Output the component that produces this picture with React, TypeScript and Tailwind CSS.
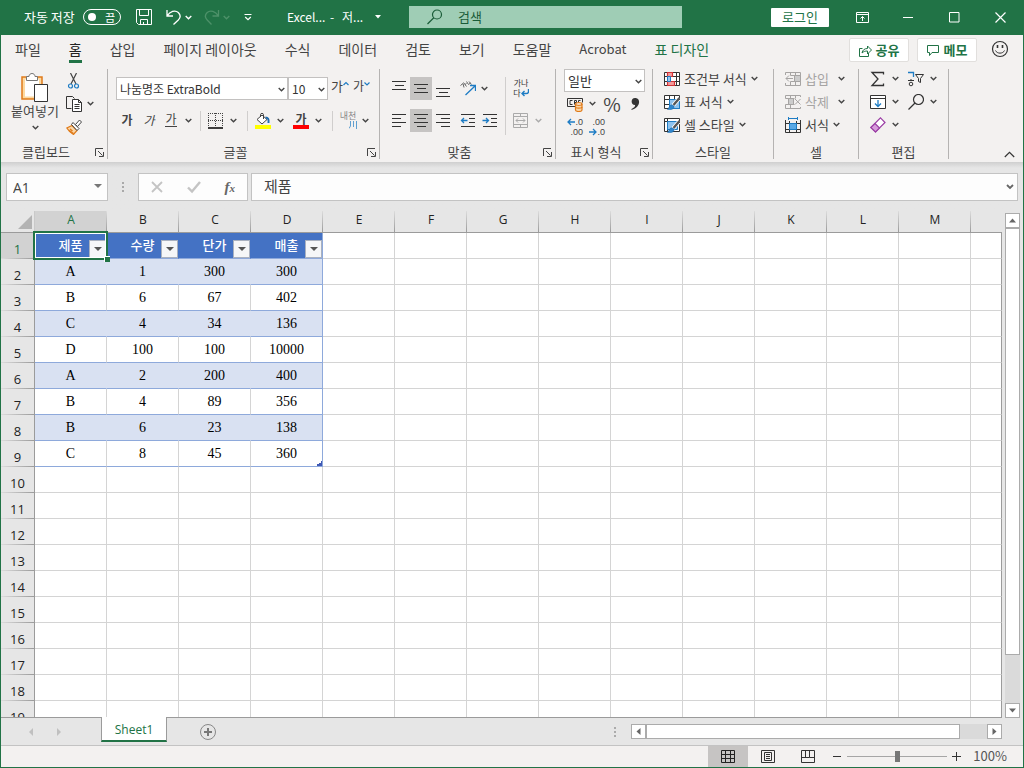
import { useState } from 'react';
import type { ReactNode } from 'react';

const menuTabs = ['파일', '홈', '삽입', '페이지 레이아웃', '수식', '데이터', '검토', '보기', '도움말', 'Acrobat', '표 디자인'];
const columns = ['A', 'B', 'C', 'D', 'E', 'F', 'G', 'H', 'I', 'J', 'K', 'L', 'M'];
const tableHeaders = ['제품', '수량', '단가', '매출'];
const tableRows = [
  ['A', '1', '300', '300'],
  ['B', '6', '67', '402'],
  ['C', '4', '34', '136'],
  ['D', '100', '100', '10000'],
  ['A', '2', '200', '400'],
  ['B', '4', '89', '356'],
  ['B', '6', '23', '138'],
  ['C', '8', '45', '360'],
];
const ROW_COUNT = 19;

function Chevron({ className = 'text-[#444]' }: { className?: string }) {
  return (
    <svg width="7" height="5" viewBox="0 0 7 5" className={`shrink-0 ${className}`} fill="none" stroke="currentColor" strokeWidth="1.4">
      <path d="M0.7 1 3.5 3.7 6.3 1" />
    </svg>
  );
}

function Icon({ children, size = 16, className = '' }: { children: ReactNode; size?: number; className?: string }) {
  return (
    <svg width={size} height={size} viewBox={`0 0 ${size} ${size}`} fill="none" stroke="currentColor" className={`shrink-0 ${className}`}>
      {children}
    </svg>
  );
}

function Tool({ label, className = 'w-[22px]', children }: { label: string; className?: string; children: ReactNode }) {
  return (
    <button type="button" aria-label={label} className={`flex h-[23px] items-center justify-center ${className}`}>
      {children}
    </button>
  );
}

function Divider() {
  return <div className="mx-1.5 h-5 w-px bg-[#d0cecd]" />;
}

function Launcher({ label }: { label: string }) {
  return (
    <button type="button" aria-label={label} className="flex w-4 items-center justify-center">
      <Icon size={9} className="text-[#444]">
        <path d="M0.5 8V0.5H8M3 3l4.5 4.5M8.5 4v4.5H4" />
      </Icon>
    </button>
  );
}

function Group({ title, launcher, className, children }: { title: string; launcher?: boolean; className: string; children: ReactNode }) {
  return (
    <section className={`flex h-[90px] shrink-0 flex-col border-r border-[#b5b3b2] ${className}`}>
      <div className="flex-1">{children}</div>
      <div className="flex h-3.5 items-center">
        <span className="flex-1 text-center leading-3.5">{title}</span>
        {launcher && <Launcher label={`${title} 설정`} />}
      </div>
    </section>
  );
}

function Dropdown({ label, value, className }: { label: string; value: string; className: string }) {
  return (
    <div className={`relative ${className}`}>
      <select aria-label={label} className="h-[23px] w-full appearance-none border border-[#c3c1c0] bg-white pl-[3px] leading-5 text-[#333]">
        <option>{value}</option>
      </select>
      <Chevron className="pointer-events-none absolute top-[10px] right-[3px] text-[#444]" />
    </div>
  );
}

function TitleBar() {
  const [autoSave, setAutoSave] = useState(false);

  return (
    <header className="flex h-[35px] shrink-0 items-center bg-[#217346] pb-px pl-[23px] text-white">
      <span className="w-[59px]">자동 저장</span>
      <button
        type="button"
        role="switch"
        aria-checked={autoSave}
        aria-label="자동 저장"
        onClick={() => setAutoSave(!autoSave)}
        className="flex h-4 w-[38px] items-center justify-between rounded-full border border-white px-1 text-[11px] leading-3"
      >
        <span className="size-2 rounded-full bg-white" />
        <span className="pr-px">끔</span>
      </button>
      <button type="button" aria-label="저장" className="ml-[15px]">
        <Icon>
          <path d="M0.5 0.5h15v15h-13l-2-2zM3.5 0.5v6h9v-6M4.5 15.5v-5h7v5M7.500 13v2.5" />
        </Icon>
      </button>
      <button type="button" aria-label="실행 취소" className="ml-3.5">
        <Icon>
          <path strokeWidth="1.3" d="M1 1v6h6M1.3 6.7C4 2.5 9 .5 12.3 3.5c2.7 2.7 2 5.5 0 7.5L7.5 15.5" />
        </Icon>
      </button>
      <button type="button" aria-label="실행 취소 목록" className="ml-[3px]"><Chevron className="text-white" /></button>
      <button type="button" aria-label="다시 실행" className="ml-3 text-[#4d9169]">
        <Icon>
          <path strokeWidth="1.3" d="M14.5 1v6h-6M14.200 6.7C11.5 2.5 6.5 .5 3.2 3.5c-2.7 2.7-2 5.5 0 7.5L7.5 15.5" />
        </Icon>
      </button>
      <button type="button" aria-label="다시 실행 목록" className="ml-[3px]"><Chevron className="text-[#4d9169]" /></button>
      <button type="button" aria-label="빠른 실행 도구 모음" className="ml-3.5">
        <Icon size={8}>
          <path d="M0.5 1.5h7" />
          <path strokeWidth="1.2" d="M1.2 4 4 6.7 6.8 4" />
        </Icon>
      </button>
      <div className="ml-[35px] flex text-[12px]">
        <span className="w-[43px]">Excel...</span>
        <span className="w-3">-</span>
        <span className="w-[33px]">저...</span>
      </div>
      <button type="button" aria-label="파일 정보">
        <Icon size={6}><path d="M0 1h6L3 4.5z" fill="currentColor" stroke="none" /></Icon>
      </button>
      <label className="ml-7 flex h-[22px] w-[273px] items-center bg-[#9fcdb5] pl-[18px] text-[#1a5c38]">
        <Icon>
          <circle cx="10" cy="5.5" r="4.5" strokeWidth="1.2" />
          <path strokeWidth="1.2" d="M6.8 8.8.5 15" />
        </Icon>
        <input aria-label="검색" placeholder="검색" className="ml-[15px] w-40 bg-transparent outline-none placeholder:text-[#1a5c38]" />
      </label>
      <div className="flex-1" />
      <button type="button" className="mr-2.5 h-[19px] w-[58px] rounded-[1px] bg-white leading-4 text-[#217346]">로그인</button>
      <Tool label="리본 메뉴 표시 옵션" className="w-[46px]">
        <Icon size={13}>
          <path d="M0.5 1.5h12v10H.5zM.5 3.5h12M6.5 10V5.5M4.5 7.500l2-2 2 2" />
        </Icon>
      </Tool>
      <Tool label="최소화" className="w-[46px]"><Icon size={11}><path d="M0 5.5h10" /></Icon></Tool>
      <Tool label="최대화" className="w-[46px]"><Icon size={11}><path d="M.5.5h9.5v9.5H.5z" /></Icon></Tool>
      <Tool label="닫기" className="w-[46px]"><Icon size={11}><path strokeWidth="1.2" d="M.5.5l10 10M10.5.5l-10 10" /></Icon></Tool>
    </header>
  );
}

function MenuTabs() {
  return (
    <nav className="flex h-8 items-start text-[14px] text-[#444]">
      {menuTabs.map((tab) => (
        <button key={tab} type="button" className={`shrink-0 px-3.5 pt-1 ${tab === '표 디자인' ? 'text-[#217346]' : ''} ${tab === 'Acrobat' ? 'text-[13px]' : ''}`}>
          <span className={`block h-6 leading-5 ${tab === '홈' ? 'border-b-3 border-[#217346] text-[#222]' : ''}`}>{tab}</span>
        </button>
      ))}
      <div className="flex-1" />
      <button type="button" className="mt-[3px] mr-2 flex h-6 w-[60px] items-center justify-center gap-1 rounded-xs border border-[#e1dfdd] bg-white text-[13px] font-bold text-[#217346]">
        <Icon size={13}>
          <path d="M3.5 4.5h-3v8h9V9M3 9c.5-3 2.5-4.5 5.5-4.5V2l4 4-4 4V7C6 7 4.5 7.5 3 9z" />
        </Icon>
        공유
      </button>
      <button type="button" className="mt-[3px] mr-3.5 flex h-6 w-[60px] items-center justify-center gap-1 rounded-xs border border-[#e1dfdd] bg-white text-[13px] font-bold text-[#217346]">
        <Icon size={13}>
          <path d="M.5 1.5h11v7H5l-2.5 3v-3h-2z" />
        </Icon>
        메모
      </button>
      <button type="button" aria-label="의견 보내기" className="mt-[5px] mr-3.5">
        <Icon size={18} className="text-[#333]">
          <circle cx="9" cy="9" r="7.5" strokeWidth="1.2" />
          <path strokeWidth="1.6" d="M6.5 5v3M11.5 5v3" />
          <path d="M4.5 10.5c1.500 3.5 7.500 3.5 9 0" />
        </Icon>
      </button>
    </nav>
  );
}

function ClipboardGroup() {
  return (
    <Group title="클립보드" launcher className="w-[107px]">
      <div className="flex pl-1.5">
        <button type="button" className="flex w-[56px] flex-col items-center pt-[3px]">
          <svg width="28" height="31" viewBox="0 0 28 31" fill="none" aria-hidden="true">
            <path d="M1 5h20v22H1z" fill="#fdd9a0" stroke="#e07b1a" strokeWidth="1.5" />
            <path d="M4 7.5h14v17H4z" fill="#fff" />
            <path d="M5.5 8.5v-4H8c0-4 6-4 6 0h2.5v4z" fill="#fff" stroke="#777" />
            <path d="M13.5 12.5h13v17h-13z" fill="#fff" stroke="#333" />
          </svg>
          <span className="leading-4">붙여넣기</span>
          <span className="pt-1.5"><Chevron /></span>
        </button>
        <div>
          <Tool label="잘라내기">
            <Icon>
              <path d="M4.500 0 10 11M10.500 0 5 11" stroke="#444" strokeWidth="1.200" />
              <circle cx="4.5" cy="13" r="2" stroke="#1e7cc4" strokeWidth="1.2" />
              <circle cx="10.5" cy="13" r="2" stroke="#1e7cc4" strokeWidth="1.2" />
            </Icon>
          </Tool>
          <div className="flex items-center">
            <Tool label="복사">
              <Icon className="text-[#333]">
                <path d="M5.5 12.5h-5V.5h6l2 2" />
                <path d="M6.5 3.5h6l3 3v9h-9zM12.5 3.5v3h3M8.5 8.5h5M8.5 10.5h5M8.5 12.5h5" fill="#fff" />
              </Icon>
            </Tool>
            <button type="button" aria-label="복사 옵션" className="pl-0.5"><Chevron /></button>
          </div>
          <Tool label="서식 복사">
            <Icon>
              <path d="M.8 9 6 6.5l5 5L7.500 15.500C5 14 2.500 11.800.8 9z" fill="#fbd7a8" stroke="#e07b1a" strokeWidth="1.2" />
              <path d="M4 10l2.500 2M3 11.500l4.500 3" stroke="#e07b1a" strokeWidth="1.4" />
              <path d="M9.5 5.5 13.500 1l2 2-4 4.5z" fill="#fff" stroke="#444" />
              <path d="M7 3.5 13 9.500l-2 2-5.500-6z" fill="#fff" stroke="#444" />
            </Icon>
          </Tool>
        </div>
      </div>
    </Group>
  );
}

function FontGroup() {
  return (
    <Group title="글꼴" launcher className="w-[272px]">
      <div className="flex flex-col gap-[9px] pt-2 pl-2 text-[12px]">
        <div className="flex">
          <Dropdown label="글꼴" value="나눔명조 ExtraBold" className="w-[172px]" />
          <Dropdown label="글꼴 크기" value="10" className="w-10" />
          <button type="button" aria-label="글꼴 크기 크게" className="ml-[3px] flex w-[22px] text-[13px] leading-[18px]">
            가<Icon size={6} className="mt-1"><path d="M.5 4 3 1.5 5.5 4" stroke="#1e7cc4" strokeWidth="1.2" /></Icon>
          </button>
          <button type="button" aria-label="글꼴 크기 작게" className="flex w-[22px] leading-[18px]">
            가<Icon size={6} className="mt-1"><path d="M.5 1.5 3 4l2.5-2.5" stroke="#1e7cc4" strokeWidth="1.2" /></Icon>
          </button>
        </div>
        <div className="flex items-center">
          <Tool label="굵게" className="w-[22px] pb-0.5"><b>가</b></Tool>
          <Tool label="기울임꼴" className="w-[22px] pb-0.5"><i>가</i></Tool>
          <Tool label="밑줄" className="w-[22px] pb-0.5"><span className="border-b border-[#444] leading-[14px]">가</span></Tool>
          <Tool label="밑줄 옵션" className="w-3"><Chevron /></Tool>
          <Divider />
          <Tool label="테두리" className="w-[18px]">
            <Icon className="text-[#444]">
              <path strokeDasharray="1 1" d="M0 .5h15M.5 0v13M14.5 0v13M7.5 0v13M0 7.5h15" />
              <path d="M0 15h15" stroke="#111" strokeWidth="1.6" />
            </Icon>
          </Tool>
          <Tool label="테두리 옵션" className="w-4"><Chevron /></Tool>
          <Divider />
          <div className="flex gap-1">
            <div className="flex">
              <Tool label="채우기 색" className="w-[18px]">
                <Icon>
                  <path d="M7 2 12 6.5 7 11 2 6.5z" fill="#fff" stroke="#444" />
                  <path d="M5.5 4V1.5C5.5 0 8.500 0 8.500 1.500V6" stroke="#444" />
                  <path d="M10.5 4.500c2.500 0 3.500 1.500 3 5.500" stroke="#1e6cb0" strokeWidth="2" />
                  <path d="M0 12h16v4H0z" fill="#ffff00" stroke="none" />
                </Icon>
              </Tool>
              <Tool label="채우기 색 옵션" className="w-4"><Chevron /></Tool>
            </div>
            <div className="flex">
              <Tool label="글꼴 색" className="w-[18px] flex-col">
                <b className="leading-3">가</b>
                <span className="h-1 w-4 bg-[#ff0000]" />
              </Tool>
              <Tool label="글꼴 색 옵션" className="w-4"><Chevron /></Tool>
            </div>
          </div>
          <Divider />
          <Tool label="윗주 필드" className="w-[18px] flex-col pb-0.5 text-[#888]">
            <span className="text-[9px] leading-[10px] whitespace-nowrap">내천</span>
            <Icon size={8} className="self-end">
              <path d="M1.5 0v5L0 7.5M4.5 0v6M7.5 0v8" stroke="#5f9fd0" />
            </Icon>
          </Tool>
          <Tool label="윗주 옵션" className="w-4"><Chevron /></Tool>
        </div>
      </div>
    </Group>
  );
}

function AlignGroup() {
  return (
    <Group title="맞춤" launcher className="w-[176px]">
      <div className="flex pt-2 pl-2 text-[#333]">
        <div className="flex flex-col gap-[9px]">
          <div className="flex">
            <Tool label="위쪽 맞춤"><Icon><path d="M1 .5h14M4 4.5h9M1 8.5h14" /></Icon></Tool>
            <Tool label="가운데 맞춤" className="w-[22px] bg-[#c6c4c3]"><Icon><path d="M1 3.5h14M4 7.5h9M1 11.5h14" /></Icon></Tool>
            <Tool label="아래쪽 맞춤"><Icon><path d="M1 7.5h14M4 11.5h9M1 15.5h14" /></Icon></Tool>
            <Tool label="방향" className="ml-[3px] w-[22px]">
              <Icon>
                <path d="M.5 4.500 3 2.500 4 6.500M3.500 1.500l3 4M5 3.500l1.500-1M6.500.500 8.500 3.500l2-1.500M9 .5l2.500 3" stroke="#666" />
                <path d="M5.5 14 15 5M10 4.500h5.500V10" stroke="#1e7cc4" strokeWidth="1.3" />
              </Icon>
            </Tool>
            <Tool label="방향 옵션" className="w-2.5"><Chevron /></Tool>
          </div>
          <div className="flex">
            <Tool label="왼쪽 맞춤"><Icon><path d="M1 1.5h14M1 5.5h9M1 9.5h14M1 13.5h9" /></Icon></Tool>
            <Tool label="텍스트 가운데" className="w-[22px] bg-[#c6c4c3]"><Icon><path d="M1 1.5h14M4 5.5h9M1 9.5h14M4 13.5h9" /></Icon></Tool>
            <Tool label="오른쪽 맞춤"><Icon><path d="M1 1.5h14M6 5.5h9M1 9.5h14M6 13.5h9" /></Icon></Tool>
            <Tool label="내어쓰기" className="ml-[3px] w-[22px]">
              <Icon>
                <path d="M1 1.5h14M9 5.5h6M9 9.5h6M1 13.5h14" />
                <path d="M7.5 7.5h-6M4 5 1.5 7.5 4 10" stroke="#1e7cc4" strokeWidth="1.3" />
              </Icon>
            </Tool>
            <Tool label="들여쓰기">
              <Icon>
                <path d="M1 1.5h14M9 5.5h6M9 9.5h6M1 13.5h14" />
                <path d="M.5 7.5h6M4 5l2.5 2.5L4 10" stroke="#1e7cc4" strokeWidth="1.3" />
              </Icon>
            </Tool>
          </div>
        </div>
        <div className="ml-1 h-[58px] w-px bg-[#d0cecd]" />
        <div className="ml-1 flex flex-col gap-[9px]">
          <Tool label="텍스트 줄 바꿈" className="w-[22px] flex-col text-[8px] leading-3">
            <span className="h-2 leading-2 whitespace-nowrap">가나</span>
            <span className="flex h-3 items-center">
              다
              <Icon size={8}><path d="M7.5 0v2.5c0 1.5-1 2-2.5 2H1M3.5 2 1 4.5 3.500 7" stroke="#1e7cc4" strokeWidth="1.4" /></Icon>
            </span>
          </Tool>
          <div className="flex">
            <Tool label="병합하고 가운데 맞춤">
              <Icon className="text-[#aaa]">
                <path d="M.5.5h14v14H.5zM.5 3.5h14M.5 11.5h14M7.5.5v3M7.5 11.5v3M3 7.5h9M5 5.5l-2 2 2 2M10 5.5l2 2-2 2" />
              </Icon>
            </Tool>
            <Tool label="병합 옵션" className="w-3"><Chevron className="text-[#aaa]" /></Tool>
          </div>
        </div>
      </div>
    </Group>
  );
}

function NumberGroup() {
  return (
    <Group title="표시 형식" launcher className="w-[97px]">
      <div className="pl-2">
        <Dropdown label="표시 형식" value="일반" className="w-[81px]" />
        <div className="flex">
          <Tool label="회계 표시 형식">
            <Icon>
              <path d="M8 10.5H.5v-8h15v4M5.500 4.5H3v4h2.500M7.5 8.5v-4h2v2h-2M13.500 4.5h-2V6.500" stroke="#333" />
              <path d="M8.5 8v6c0 2 6.5 2 6.5 0V8" fill="#fbd7a8" stroke="#e07b1a" strokeWidth="1.2" />
              <ellipse cx="11.75" cy="8" rx="3.25" ry="1.3" fill="#fff" stroke="#e07b1a" strokeWidth="1.2" />
              <path d="M8.5 11c0 1.5 6.5 1.5 6.5 0" stroke="#e07b1a" strokeWidth="1.2" />
            </Icon>
          </Tool>
          <Tool label="회계 옵션" className="w-[13px]"><Chevron /></Tool>
          <Tool label="백분율 스타일" className="w-[26px]"><span className="text-[19px] leading-[22px]">%</span></Tool>
          <Tool label="쉼표 스타일" className="w-5">
            <Icon size={12}><path d="M6 0c5.500-.5 6.500 9-3.500 12v-1C5.500 9.5 6.5 8 6 7 1.500 7 1.500 0 6 0z" fill="#333" stroke="none" /></Icon>
          </Tool>
        </div>
        <div className="flex font-['Liberation_Sans',sans-serif] text-[9px] leading-[10px]">
          <Tool label="자릿수 늘림">
            <span className="w-4 text-right">
              <span className="flex items-center justify-end">
                <Icon size={8}><path d="M8 4H1M4 1 1 4l3 3" stroke="#1e7cc4" strokeWidth="1.3" /></Icon>.0
              </span>
              <span className="block">.00</span>
            </span>
          </Tool>
          <Tool label="자릿수 줄임">
            <span className="w-4 text-right">
              <span className="block">.00</span>
              <span className="flex items-center justify-end">
                <Icon size={8}><path d="M0 4h7M4 1l3 3-3 3" stroke="#1e7cc4" strokeWidth="1.3" /></Icon>.0
              </span>
            </span>
          </Tool>
        </div>
      </div>
    </Group>
  );
}

function MenuItem({ icon, label, gap = 'gap-1', className = '' }: { icon: ReactNode; label: string; gap?: string; className?: string }) {
  return (
    <button type="button" className={`flex h-[23px] items-center pb-1 ${gap}`}>
      <span className={`flex items-center gap-1 ${className}`}>
        {icon}
        {label}
      </span>
      <Chevron />
    </button>
  );
}

function Brush() {
  return (
    <>
      <path d="M15.500 4 9 11.500" stroke="#fff" strokeWidth="4" />
      <path d="M15.500 4 9.500 11" stroke="#555" strokeWidth="2.400" />
      <path d="M10 12c.500 3-3 4-6.500 3.500C5 14.500 5 11.500 7.500 10.800z" fill="#2f86cc" stroke="#1e6cb0" strokeWidth=".6" />
    </>
  );
}

function StylesGroup() {
  return (
    <Group title="스타일" className="w-[121px]">
      <div className="flex flex-col items-start pl-[11px]">
        <MenuItem
          label="조건부 서식"
          icon={
            <Icon className="text-[#333]">
              <path d="M.5 1.5h15v13H.5zM.5 5.5h15M.5 10.5h15M3.5 1.5v13M12.5 1.5v13" fill="#fff" />
              <path d="M3.5 1.500h5v4h-5zM3.5 10.5h7v4h-7z" fill="#f49a9a" stroke="#d13438" strokeWidth="1.2" />
              <path d="M3.5 5.5h3v5h-3z" fill="#9cc9f0" stroke="#1e7cc4" />
            </Icon>
          }
        />
        <MenuItem
          label="표 서식"
          icon={
            <Icon className="text-[#333]">
              <path d="M.5 1.5h15v13H.5zM.5 5.5h15M.5 10.5h15M5.5 1.5v13M10.5 1.5v13" fill="#fff" />
              <path d="M5.5 5.5h10v9h-10z" fill="#8fc3ee" stroke="#1e7cc4" />
              <Brush />
            </Icon>
          }
        />
        <MenuItem
          label="셀 스타일"
          icon={
            <Icon className="text-[#333]">
              <path d="M.5 1.5h15v13H.5zM.5 4.5h15M3.5 1.5v13" fill="#fff" />
              <path d="M3.5 4.5h10v8h-10z" fill="#8fc3ee" stroke="#1e7cc4" />
              <Brush />
            </Icon>
          }
        />
      </div>
    </Group>
  );
}

function CellsGroup() {
  return (
    <Group title="셀" className="w-[85px]">
      <div className="flex flex-col items-start pl-[11px]">
        <MenuItem
          label="삽입"
          gap="gap-[9px]"
          className="text-[#a6a4a3]"
          icon={
            <Icon>
              <path d="M.5 4V1.5h15v13H.5V12M5.500 1.5v3h10M5.5 10.5h10M5.5 14.5v-4M10.5 1.5v13" />
              <path d="M9.5 4.5h6v6h-6z" fill="#ccc" />
              <path d="M8 7.5H1M4 4.5l-3 3 3 3" />
            </Icon>
          }
        />
        <MenuItem
          label="삭제"
          gap="gap-[9px]"
          className="text-[#a6a4a3]"
          icon={
            <Icon>
              <path d="M15.5 3V1.5H.5v3h9M15.5 13v1.5H.5v-4h9M5.5 1.5v13M10.5 1.5v3" />
              <path d="M3.5 4.5h5v6h-5z" fill="#ccc" />
              <path d="M10 5l5.5 5.5M15.5 5 10 10.5" />
            </Icon>
          }
        />
        <MenuItem
          label="서식"
          icon={
            <Icon className="text-[#333]">
              <path d="M.5 3v12.5h15V3M.5 6.5h15M.5 12.5h15M4.5 4v11.5M11.5 4v11.5" />
              <path d="M4.5 6.5h7v6h-7z" fill="#5aa9e6" stroke="#1e7cc4" />
              <path d="M3.5 0v3M12.5 0v3M3.5 1.5h9" stroke="#1e7cc4" />
            </Icon>
          }
        />
      </div>
    </Group>
  );
}

function EditGroup() {
  return (
    <Group title="편집" className="w-[90px]">
      <div className="grid grid-cols-[38px_auto] pl-[11px] *:flex *:h-[23px] *:items-center *:gap-1.5 *:pb-1 *:text-[#333]">
        <button type="button" aria-label="자동 합계">
          <Icon><path strokeWidth="1.3" d="M13.5 3.5v-2H2l6 6.5-6 6.5h11.5v-2" /></Icon>
          <Chevron />
        </button>
        <button type="button" aria-label="정렬 및 필터">
          <Icon>
            <path d="M0 1.5h5.5V6" stroke="#1e7cc4" strokeWidth="1.3" />
            <path d="M7.5 3.5h8l-3 4v4l-2-1v-3zM0 9.5h6M3 8v1.5" />
            <circle cx="3" cy="13" r="1.8" />
          </Icon>
          <Chevron />
        </button>
        <button type="button" aria-label="채우기">
          <Icon>
            <path d="M.5 1.5h15v13H.5zM.5 4.5h15" fill="#fff" />
            <path d="M8 6v6.5M5 9.5l3 3 3-3" stroke="#1e7cc4" strokeWidth="1.3" />
          </Icon>
          <Chevron />
        </button>
        <button type="button" aria-label="찾기 및 선택">
          <Icon>
            <circle cx="10.5" cy="5.5" r="5" strokeWidth="1.2" />
            <path strokeWidth="1.3" d="M7 9 .5 15.5" />
          </Icon>
          <Chevron />
        </button>
        <button type="button" aria-label="지우기">
          <Icon>
            <path d="M10.5.8 15 5.5 5.5 15 .8 10.5z" fill="#fff" stroke="#9b3fa5" strokeWidth="1.2" />
            <path d="M5 6.500 9.500 11 5.5 15 .8 10.5z" fill="#d79bdc" stroke="#9b3fa5" strokeWidth="1.2" />
          </Icon>
          <Chevron />
        </button>
      </div>
    </Group>
  );
}

function FormulaBar() {
  return (
    <div className="flex shrink-0 bg-linear-to-b from-[#cfcfcf] to-[#e6e6e6] to-[6px] px-[5px] pt-[11px] pb-[10px] text-[#444]">
      <div className="relative">
        <input aria-label="이름 상자" defaultValue="A1" className="h-7 w-[102px] border border-[#c3c3c3] bg-[#fdfdfd] pl-1.5 font-['Open_Sans',sans-serif] text-[14px] outline-none" />
        <Icon size={8} className="pointer-events-none absolute top-[9px] right-1.5"><path d="M0 2h8L4 6z" fill="#777" stroke="none" /></Icon>
      </div>
      <div className="flex w-[30px] flex-col items-center justify-center gap-0.5">
        <span className="size-0.5 bg-[#a9a9a9]" />
        <span className="size-0.5 bg-[#a9a9a9]" />
        <span className="size-0.5 bg-[#a9a9a9]" />
      </div>
      <div className="flex h-7 w-[110px] items-center justify-around border border-[#c3c3c3] bg-[#fdfdfd]">
        <button type="button" aria-label="취소"><Icon size={12}><path d="M1 1l10 10M11 1 1 11" stroke="#c4c4c4" strokeWidth="1.8" /></Icon></button>
        <button type="button" aria-label="입력"><Icon size={14}><path d="M1 7.5 5 11.5 13 2" stroke="#c4c4c4" strokeWidth="2.4" /></Icon></button>
        <button type="button" aria-label="함수 삽입" className="font-['Liberation_Serif',serif] text-[15px] leading-5 font-bold text-[#666] italic">
          f<span className="text-[11px]">x</span>
        </button>
      </div>
      <div className="relative ml-[3px] flex-1">
        <input aria-label="수식 입력줄" defaultValue="제품" className="h-7 w-full border border-[#c3c3c3] bg-[#fdfdfd] pb-1 pl-3 text-[15px] outline-none" />
        <Icon size={8} className="absolute top-[10px] right-1"><path d="M1 2 4 5l3-3" stroke="#666" strokeWidth="1.8" /></Icon>
      </div>
    </div>
  );
}

function cellClass(row: number, col: number) {
  if (row > 8 || col > 3) return 'border-[#d4d4d4] bg-white';
  const right = col === 3 ? 'border-r-[#8ea9db]' : row === 0 ? 'border-r-[#4472c4]' : row % 2 === 1 ? 'border-r-[#d9e1f2]' : 'border-r-[#d4d4d4]';
  const fill = row === 0 ? 'bg-[#4472c4]' : row % 2 === 1 ? 'bg-[#d9e1f2]' : 'bg-white';
  return `border-b-[#8ea9db] ${right} ${fill}`;
}

function Sheet() {
  const rows = Array.from({ length: ROW_COUNT }, (_, i) => i);

  return (
    <div className="min-w-0 flex-1 overflow-hidden border-b border-[#9b9b9b]">
      <table className="w-full table-fixed border-separate border-spacing-0 text-center">
        <thead>
          <tr className="h-[22px] font-['Open_Sans',sans-serif] text-[12px] text-[#222]">
            <td className="w-[34px] border-r border-b border-r-[#c9c9c9] border-b-[#9b9b9b] p-0">
              <Icon size={14} className="mr-[2px] ml-auto"><path d="M14 0v14H0z" fill="#b3b3b3" stroke="none" /></Icon>
            </td>
            {columns.map((col) => (
              <th
                key={col}
                scope="col"
                className={`w-[72px] border-b bg-[linear-gradient(#dcdcdc,#9b9b9b)] bg-[length:1px_100%] bg-right bg-no-repeat p-0 pb-1 leading-[17px] font-normal ${
                  col === 'A' ? 'border-[#217346] bg-[#d2d2d2] text-[#217346]' : 'border-[#9b9b9b]'
                }`}
              >
                {col}
              </th>
            ))}
            <td className="border-b border-[#9b9b9b] p-0" />
          </tr>
        </thead>
        <tbody>
          {rows.map((row) => (
            <tr key={row} className="h-[26px]">
              <th
                scope="row"
                className={`border-r border-[#9b9b9b] bg-[linear-gradient(to_right,#dcdcdc,#9b9b9b)] bg-[length:100%_1px] bg-bottom bg-no-repeat p-0 pt-1.5 pb-px font-['Open_Sans',sans-serif] text-[13px] leading-[18px] font-normal ${
                  row === 0 ? 'bg-[#d2d2d2] text-[#217346]' : 'text-[#222]'
                }`}
              >
                {row + 1}
              </th>
              {columns.map((col, i) => (
                <td key={col} className={`relative border-r border-b p-0 font-['Liberation_Serif','Noto_Sans_CJK_KR',serif] text-[14px] leading-[25px] text-black ${cellClass(row, i)}`}>
                  {row === 0 && i < 4 && (
                    <>
                      <span className="text-[13px] font-medium text-white">{tableHeaders[i]}</span>
                      <button type="button" aria-label={`${tableHeaders[i]} 필터`} className="absolute right-0 bottom-0 flex h-[18px] w-[17px] items-center justify-center border border-[#a9b1c0] bg-[#f5f6f8]">
                        <Icon size={8}><path d="M0 2h8L4 6z" fill="#555" stroke="none" /></Icon>
                      </button>
                    </>
                  )}
                  {row > 0 && tableRows[row - 1]?.[i]}
                  {row === 0 && i === 0 && (
                    <span className="pointer-events-none absolute -inset-0.5 z-10 border-2 border-[#217346] shadow-[inset_0_0_0_1px_white]">
                      <span className="absolute -right-1 -bottom-1 size-1.5 border-t border-l border-white bg-[#217346]" />
                    </span>
                  )}
                  {row === 8 && i === 3 && (
                    <Icon size={6} className="absolute right-0 bottom-0"><path d="M5 1h1v5H1V4h2V3h2z" fill="#4059b5" stroke="none" /></Icon>
                  )}
                </td>
              ))}
              <td className="border-r border-b border-r-[#9b9b9b] border-b-[#d4d4d4] bg-white p-0" />
            </tr>
          ))}
        </tbody>
      </table>
    </div>
  );
}

const scrollButton = 'flex size-[15px] shrink-0 items-center justify-center border border-[#ababab] bg-white';

function VerticalScroll() {
  return (
    <div className="flex w-[21px] shrink-0 flex-col pt-0.5 pl-[3px]">
      <button type="button" aria-label="위로 스크롤" className={scrollButton}>
        <Icon size={7}><path d="M0 5.5h7L3.5 1.5z" fill="#666" stroke="none" /></Icon>
      </button>
      <div className="flex w-[15px] flex-1 flex-col bg-[#dadada]">
        <div className="flex-1 border border-[#ababab] bg-white" />
        <div className="h-12" />
      </div>
      <button type="button" aria-label="아래로 스크롤" className={scrollButton}>
        <Icon size={7}><path d="M0 1.5h7L3.5 5.5z" fill="#666" stroke="none" /></Icon>
      </button>
    </div>
  );
}

function SheetTabs() {
  return (
    <div className="flex h-7 shrink-0 items-center border-b border-[#c3c3c3]">
      <div className="flex w-[100px] items-center gap-5 pl-[26px]">
        <button type="button" aria-label="이전 시트"><Icon size={8}><path d="M6 0v8L2 4z" fill="#c0c0c0" stroke="none" /></Icon></button>
        <button type="button" aria-label="다음 시트"><Icon size={8}><path d="M2 0v8l4-4z" fill="#c0c0c0" stroke="none" /></Icon></button>
      </div>
      <button type="button" className="relative -mt-px h-[25px] w-[66px] self-start border-x border-b-2 border-x-[#9b9b9b] border-b-[#217346] bg-white pt-0.5 font-['Open_Sans',sans-serif] text-[12px] text-[#217346]">
        Sheet1
      </button>
      <button type="button" aria-label="새 시트" className="ml-8">
        <Icon size={18}>
          <circle cx="9" cy="9" r="7.5" stroke="#888" />
          <path d="M9 5v8M5 9h8" stroke="#777" strokeWidth="2" />
        </Icon>
      </button>
      <div className="flex-1" />
      <div className="flex flex-col gap-0.5 pr-[15px]">
        <span className="size-0.5 bg-[#ababab]" />
        <span className="size-0.5 bg-[#ababab]" />
        <span className="size-0.5 bg-[#ababab]" />
      </div>
      <div className="mr-[21px] flex w-[371px]">
        <button type="button" aria-label="왼쪽으로 스크롤" className={scrollButton}>
          <Icon size={7}><path d="M5.5 0v7L1.5 3.5z" fill="#666" stroke="none" /></Icon>
        </button>
        <div className="flex h-[15px] flex-1 bg-[#dadada]">
          <div className="flex-1 border border-[#ababab] bg-white" />
          <div className="w-[27px]" />
        </div>
        <button type="button" aria-label="오른쪽으로 스크롤" className={scrollButton}>
          <Icon size={7}><path d="M1.5 0v7l4-3.5z" fill="#666" stroke="none" /></Icon>
        </button>
      </div>
    </div>
  );
}

function StatusBar() {
  const [zoom, setZoom] = useState(100);

  return (
    <footer className="flex h-[21px] shrink-0 items-center justify-end bg-[#f3f1f0] pr-4 text-[#333]">
      <button type="button" aria-label="기본 보기" className="flex h-full w-10 items-center justify-center bg-[#c6c4c3] text-[#222]">
        <Icon size={14}><path d="M.5.5h13v12H.5zM.5 4.5h13M.5 8.5h13M4.5.5v12M9.5.5v12" /></Icon>
      </button>
      <button type="button" aria-label="페이지 레이아웃 보기" className="flex w-10 justify-center">
        <Icon size={14}><path d="M.5.5h13v12H.5zM3.5 2.5h7v8h-7zM5 4.5h4M5 6.5h4M5 8.5h4" /></Icon>
      </button>
      <button type="button" aria-label="페이지 나누기 미리 보기" className="flex w-10 justify-center">
        <Icon size={14}><path d="M.5.5h13v12H.5zM.5 7.5h8v-7M4.5.5v7M8.5 7.5h5" /></Icon>
      </button>
      <button type="button" aria-label="축소" className="flex w-[19px] justify-center" onClick={() => setZoom(Math.max(10, zoom - 10))}>
        <Icon size={9}><path d="M0 4.5h8" /></Icon>
      </button>
      <input
        type="range"
        aria-label="확대/축소"
        min={10}
        max={190}
        value={zoom}
        onChange={(e) => setZoom(Number(e.target.value))}
        className="h-3 w-[100px] appearance-none bg-[linear-gradient(#a6a6a6,#a6a6a6)] bg-[length:100%_1px] bg-center bg-no-repeat [&::-webkit-slider-thumb]:h-[11px] [&::-webkit-slider-thumb]:w-[5px] [&::-webkit-slider-thumb]:appearance-none [&::-webkit-slider-thumb]:bg-[#777]"
      />
      <button type="button" aria-label="확대" className="flex w-[19px] justify-center" onClick={() => setZoom(Math.min(190, zoom + 10))}>
        <Icon size={9}><path d="M0 4.5h9M4.5 0v9" /></Icon>
      </button>
      <span className="w-[41px] pb-0.5 text-right text-[#555]">{zoom}%</span>
    </footer>
  );
}

export default function App() {
  return (
    <div className="flex h-screen flex-col overflow-hidden border-x border-b border-[#217346] bg-[#e6e6e6] font-['Noto_Sans_CJK_KR',sans-serif] text-[13px] text-[#444]">
      <TitleBar />
      <div className="shrink-0 bg-[#f3f1f0]">
        <MenuTabs />
        <div className="flex pt-0.5 pb-[3px]">
          <ClipboardGroup />
          <FontGroup />
          <AlignGroup />
          <NumberGroup />
          <StylesGroup />
          <CellsGroup />
          <EditGroup />
          <div className="flex flex-1 items-end justify-end pr-2">
            <button type="button" aria-label="리본 메뉴 축소">
              <Icon size={11} className="text-[#333]"><path strokeWidth="1.2" d="M.8 9 5.5 4.300l4.700 4.700" /></Icon>
            </button>
          </div>
        </div>
      </div>
      <FormulaBar />
      <div className="flex min-h-0 flex-1">
        <Sheet />
        <VerticalScroll />
      </div>
      <SheetTabs />
      <StatusBar />
    </div>
  );
}
